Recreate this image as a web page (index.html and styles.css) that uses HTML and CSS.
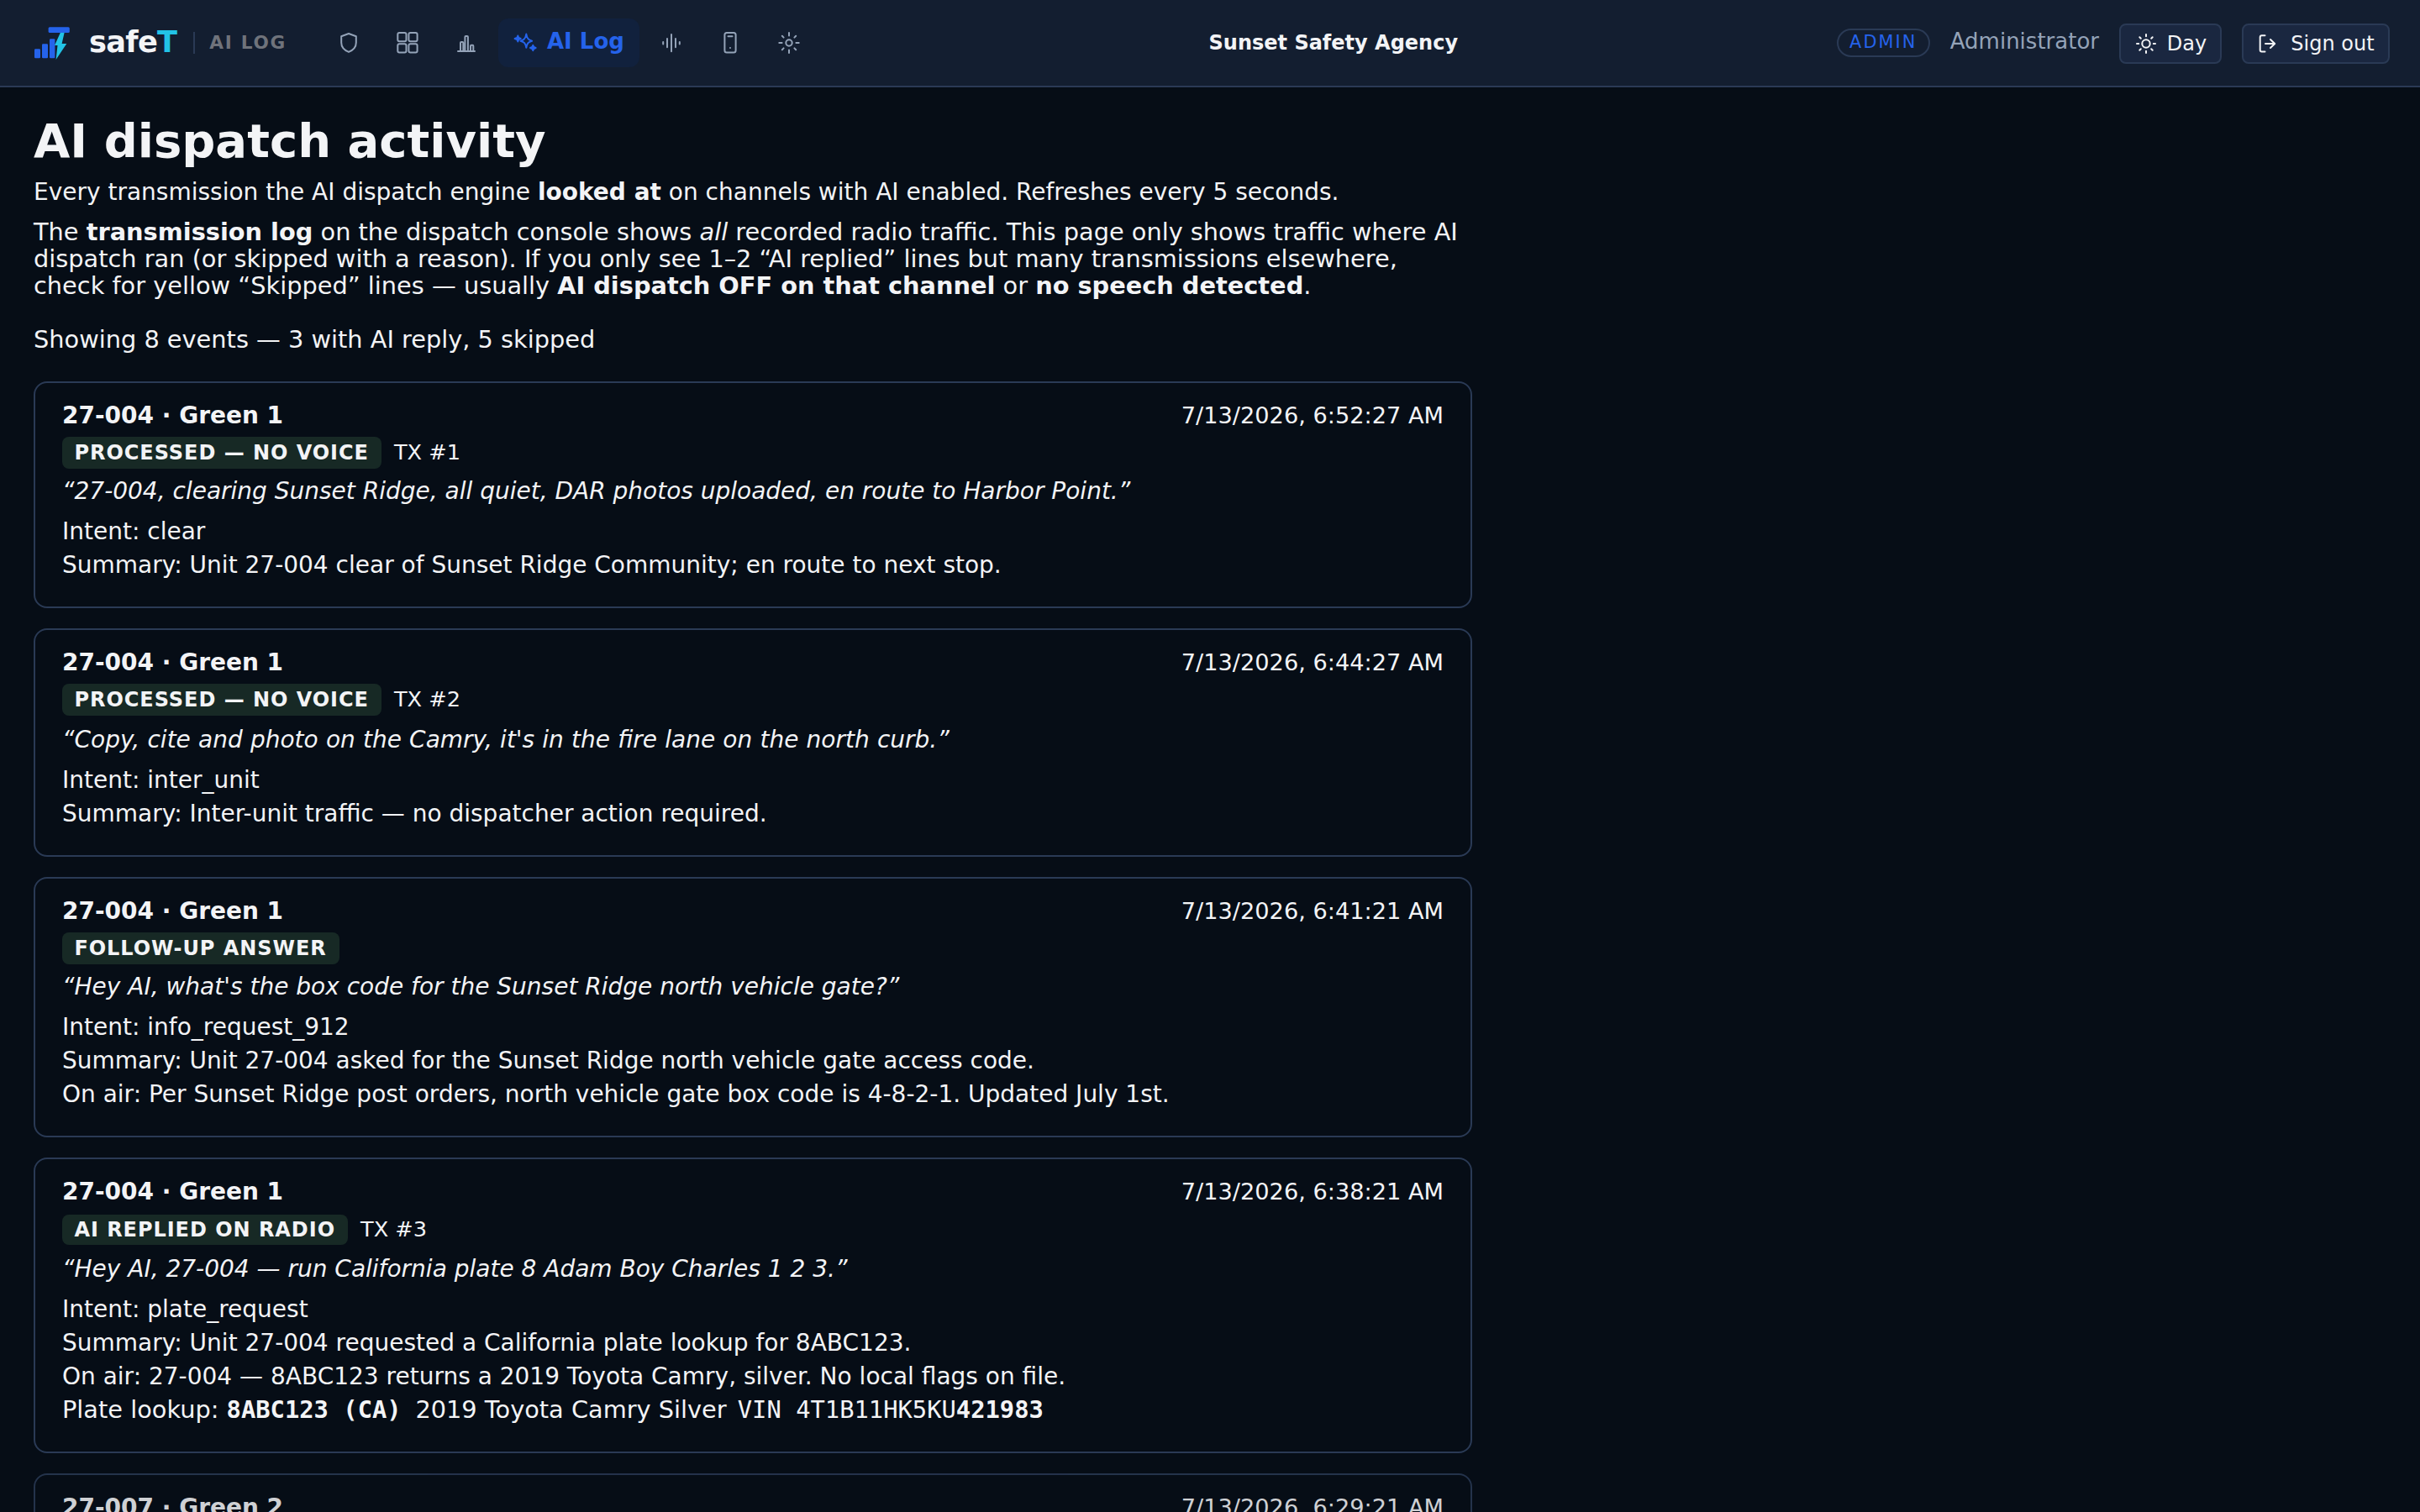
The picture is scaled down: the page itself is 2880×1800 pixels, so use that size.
FILE: index.html
```html
<!DOCTYPE html>
<html lang="en">
<head>
    <meta charset="UTF-8">
    <meta name="viewport" content="width=device-width, initial-scale=1.0">
    <title>safeT - AI Log</title>
    <link rel="stylesheet" href="styles.css">
</head>
<body>
    <header class="topbar">
        <div class="brand">
            <svg class="logo" viewBox="0 0 44 44">
                <g fill="#2563eb">
                    <rect x="1" y="29.3" width="7" height="11" rx="1.2"/>
                    <rect x="10" y="23.3" width="7" height="17" rx="1.2"/>
                    <rect x="19" y="17.3" width="6.4" height="23" rx="1.2"/>
                    <rect x="17.6" y="3.3" width="25.2" height="6.8" rx="1.5"/>
                </g>
                <path fill="#22c3e6" d="M31.8 10h4.8l-3 13H39.3L26.6 42l1.9-17H25z"/>
            </svg>
            <span class="brand-name">safe<span>T</span></span>
            <span class="brand-page">AI LOG</span>
        </div>
        <nav class="nav">
            <a class="nav-item">
                <svg class="icon" viewBox="0 0 28 28"><path d="M14 3l8.8 3.2v7.6c0 5-3.6 9-8.8 11.1-5.2-2.1-8.8-6.1-8.8-11.1V6.2z"/></svg>
            </a>
            <a class="nav-item">
                <svg class="icon" viewBox="0 0 28 28">
                    <rect x="2.3" y="2.1" width="10.2" height="10.2" rx="2"/>
                    <rect x="15.4" y="2.1" width="10.2" height="10.2" rx="2"/>
                    <rect x="2.3" y="15.2" width="10.2" height="10.2" rx="2"/>
                    <rect x="15.4" y="15.2" width="10.2" height="10.2" rx="2"/>
                </svg>
            </a>
            <a class="nav-item">
                <svg class="icon" viewBox="0 0 28 28"><path d="M4 24h20M7 24V14q0-1 1-1h1.3q1 0 1 1v10M12.4 24V7q0-1 1-1h1.5q1 0 1 1v17M19 24v-6.3q0-1 1-1h1.3q1 0 1 1V24"/></svg>
            </a>
            <a class="nav-item active">
                <svg class="icon" viewBox="0 0 28 28">
                    <path d="M15.3 3.6c1 5.200 2.500 7 6.800 8.100-4.300 1.100-5.800 2.900-6.800 8.100-1-5.200-2.500-7-6.800-8.100 4.300-1.100 5.800-2.900 6.800-8.100z"/>
                    <path class="solid" d="M5.300 5.500l1 2.500 2.400 1-2.400 1-1 2.500-1-2.500-2.700-1 2.700-1zM23.300 16.800l1 2.200 2.300 1-2.300 1-1 2.200-1-2.200-2.300-1 2.300-1z"/>
                </svg>
                <span>AI Log</span>
            </a>
            <a class="nav-item">
                <svg class="icon" viewBox="0 0 28 28"><path d="M4.2 13v2.5M9 9v10.300M14 4v20.300M19 9v10.300M23.800 13v2.500"/></svg>
            </a>
            <a class="nav-item">
                <svg class="icon" viewBox="0 0 28 28"><rect x="7.4" y="2" width="13.2" height="23.5" rx="2.5"/><path d="M11.5 6.3h5M14 20v.1"/></svg>
            </a>
            <a class="nav-item">
                <svg class="icon" viewBox="0 0 28 28"><circle cx="14" cy="14" r="3.7"/><path d="M14 2v3.6M14 22.400V26M2.300 14h3.300M22.400 14h3.300M5.800 5.800l1.800 1.800M20.400 20.400l1.800 1.800M22.200 5.800l-1.800 1.800M7.600 20.400l-1.800 1.800"/></svg>
            </a>
        </nav>
        <div class="agency">Sunset Safety Agency</div>
        <div class="account">
            <span class="role">ADMIN</span>
            <span class="user">Administrator</span>
            <button class="btn btn-day">
                <svg class="icon" viewBox="0 0 28 28"><circle cx="14" cy="14" r="4.7"/><path d="M14 3v2.200M14 22.800V25M3 14h2.200M22.800 14H25M6.300 6.300l1.500 1.500M20.200 20.200l1.500 1.500M21.700 6.300l-1.500 1.500M7.800 20.200l-1.500 1.500"/></svg>
                <span>Day</span>
            </button>
            <button class="btn btn-out">
                <svg class="icon" viewBox="0 0 28 28"><path d="M9.5 4.3H5.7q-2 0-2 2v15.200q0 2 2 2h3.800M10 14h11M16 9l5.200 5-5.200 5"/></svg>
                <span>Sign out</span>
            </button>
        </div>
    </header>

    <main class="page">
        <h1>AI dispatch activity</h1>
        <p class="lead">Every transmission the AI dispatch engine <strong>looked at</strong> on channels with AI enabled. Refreshes every 5 seconds.</p>
        <p>The <strong>transmission log</strong> on the dispatch console shows <em>all</em> recorded radio traffic. This page only shows traffic where AI dispatch ran (or skipped with a reason). If you only see 1–2 “AI replied” lines but many transmissions elsewhere, check for yellow “Skipped” lines — usually <strong>AI dispatch OFF on that channel</strong> or <strong>no speech detected</strong>.</p>
        <p class="count">Showing 8 events — 3 with AI reply, 5 skipped</p>

        <article class="card">
            <div class="card-head"><strong>27-004 · Green 1</strong><time>7/13/2026, 6:52:27 AM</time></div>
            <div class="status"><span class="badge">PROCESSED — NO VOICE</span><span class="tx">TX #1</span></div>
            <p class="quote">“27-004, clearing Sunset Ridge, all quiet, DAR photos uploaded, en route to Harbor Point.”</p>
            <p>Intent: clear</p>
            <p>Summary: Unit 27-004 clear of Sunset Ridge Community; en route to next stop.</p>
        </article>

        <article class="card roomy">
            <div class="card-head"><strong>27-004 · Green 1</strong><time>7/13/2026, 6:44:27 AM</time></div>
            <div class="status"><span class="badge">PROCESSED — NO VOICE</span><span class="tx">TX #2</span></div>
            <p class="quote">“Copy, cite and photo on the Camry, it's in the fire lane on the north curb.”</p>
            <p>Intent: inter_unit</p>
            <p>Summary: Inter-unit traffic — no dispatcher action required.</p>
        </article>

        <article class="card">
            <div class="card-head"><strong>27-004 · Green 1</strong><time>7/13/2026, 6:41:21 AM</time></div>
            <div class="status"><span class="badge">FOLLOW-UP ANSWER</span></div>
            <p class="quote">“Hey AI, what's the box code for the Sunset Ridge north vehicle gate?”</p>
            <p>Intent: info_request_912</p>
            <p>Summary: Unit 27-004 asked for the Sunset Ridge north vehicle gate access code.</p>
            <p>On air: Per Sunset Ridge post orders, north vehicle gate box code is 4-8-2-1. Updated July 1st.</p>
        </article>

        <article class="card replied">
            <div class="card-head"><strong>27-004 · Green 1</strong><time>7/13/2026, 6:38:21 AM</time></div>
            <div class="status"><span class="badge">AI REPLIED ON RADIO</span><span class="tx">TX #3</span></div>
            <p class="quote">“Hey AI, 27-004 — run California plate 8 Adam Boy Charles 1 2 3.”</p>
            <p>Intent: plate_request</p>
            <p>Summary: Unit 27-004 requested a California plate lookup for 8ABC123.</p>
            <p>On air: 27-004 — 8ABC123 returns a 2019 Toyota Camry, silver. No local flags on file.</p>
            <p class="lookup">Plate lookup: <b class="mono plate">8ABC123 (CA)</b> 2019 Toyota Camry Silver <span class="mono vin">VIN 4T1B11HK5KU<b>421983</b></span></p>
        </article>

        <article class="card skipped">
            <div class="card-head"><strong>27-007 · Green 2</strong><time>7/13/2026, 6:29:21 AM</time></div>
        </article>
    </main>
</body>
</html>
```
FILE: styles.css
```css
* {
    box-sizing: border-box;
}
body {
    margin: 0;
    height: 1800px;
    overflow: hidden;
    background: #060d16;
    color: #f3f4f6;
    font-family: "DejaVu Sans", sans-serif;
    font-size: 28px;
    line-height: 32px;
}
.topbar {
    display: flex;
    align-items: center;
    height: 104px;
    padding: 0 36px 0 40px;
    background: #131e30;
    border-bottom: 2px solid #2a3a55;
}
.brand {
    display: flex;
    align-items: center;
    width: 343px;
}
.logo {
    width: 44px;
    height: 44px;
    margin-right: 22px;
}
.brand-name {
    padding-bottom: 2px;
    font-size: 35.2px;
    font-weight: bold;
    letter-spacing: -0.02em;
}
.brand-name span {
    color: #22c3e6;
}
.brand-page {
    margin-left: 20px;
    padding-left: 17px;
    border-left: 2px solid #2a3a55;
    color: #6f737b;
    font-size: 21.6px;
    font-weight: bold;
    line-height: 26px;
    letter-spacing: 0.08em;
}
.nav {
    display: flex;
    gap: 6px;
}
.nav-item {
    display: flex;
    align-items: center;
    gap: 12px;
    height: 58px;
    padding: 0 18px;
    border-radius: 12px;
    color: #94a3b8;
    font-size: 26px;
    font-weight: bold;
}
.nav-item span {
    padding-bottom: 4px;
}
.nav-item.active {
    color: #2563eb;
    background: #11213d;
}
.icon {
    width: 28px;
    height: 28px;
    fill: none;
    stroke: currentColor;
    stroke-width: 2;
    stroke-linecap: round;
    stroke-linejoin: round;
}
.icon .solid {
    fill: currentColor;
}
.agency {
    flex: 1;
    padding-left: 17px;
    text-align: center;
    font-size: 24px;
    font-weight: bold;
}
.account {
    display: flex;
    align-items: center;
    gap: 24px;
}
.role {
    height: 34px;
    padding: 0 13.4px;
    border: 2px solid #2a3a55;
    border-radius: 17px;
    color: #2563eb;
    font-size: 20.8px;
    line-height: 28px;
    letter-spacing: 0.1em;
}
.user {
    padding-bottom: 4px;
    color: #94a3b8;
    font-size: 26px;
}
.btn {
    display: flex;
    align-items: center;
    justify-content: center;
    gap: 11px;
    height: 48px;
    margin-top: 2px;
    padding: 0;
    border: 2px solid #2a3a55;
    border-radius: 8px;
    background: #1a2740;
    color: #f3f4f6;
    font-family: inherit;
    font-size: 24px;
}
.btn-day {
    width: 122px;
}
.btn-out {
    gap: 12px;
    width: 176px;
}
.page {
    width: 1792px;
    padding: 32px 40px;
}
h1 {
    margin: 0 0 13px;
    font-size: 56px;
    line-height: 64px;
}
p {
    margin: 0;
}
.page > p {
    max-width: 1704px;
    margin-bottom: 16px;
    font-size: 28.8px;
}
.page > .lead {
    margin-bottom: 15px;
    font-size: 28px;
}
.page > .count {
    margin: 32px 0 34px;
}
.card {
    margin-bottom: 24px;
    padding: 23px 32px 33px;
    border: 2px solid #2a3a55;
    border-radius: 16px;
}
.card-head {
    display: flex;
    justify-content: space-between;
    align-items: baseline;
}
.card-head time {
    font-size: 27.2px;
}
.status {
    display: flex;
    align-items: center;
    gap: 15px;
    margin: 9px 0 11px;
}
.badge {
    padding: 3px 15px 3px 14.4px;
    border-radius: 8px;
    background: #172925;
    font-size: 24px;
    font-weight: bold;
    letter-spacing: 0.04em;
}
.tx {
    padding-bottom: 3px;
    font-size: 25.6px;
}
.card p + p {
    margin-top: 8px;
}
.card .quote {
    margin-bottom: 16px;
    font-style: italic;
}
.roomy .status {
    margin-bottom: 13px;
}
.roomy .quote {
    word-spacing: 0.3px;
}
.replied .status {
    margin: 11px 0 13px;
}
.replied .badge {
    padding-top: 2px;
    padding-bottom: 2px;
}
.card .lookup {
    height: 33px;
    margin-top: 7px;
    font-size: 28.8px;
}
.mono {
    font-family: "DejaVu Sans Mono", monospace;
}
.plate {
    margin-right: 7.6px;
}
.vin {
    margin-left: 4px;
}
.skipped {
    height: 300px;
    opacity: 0.85;
}
```
